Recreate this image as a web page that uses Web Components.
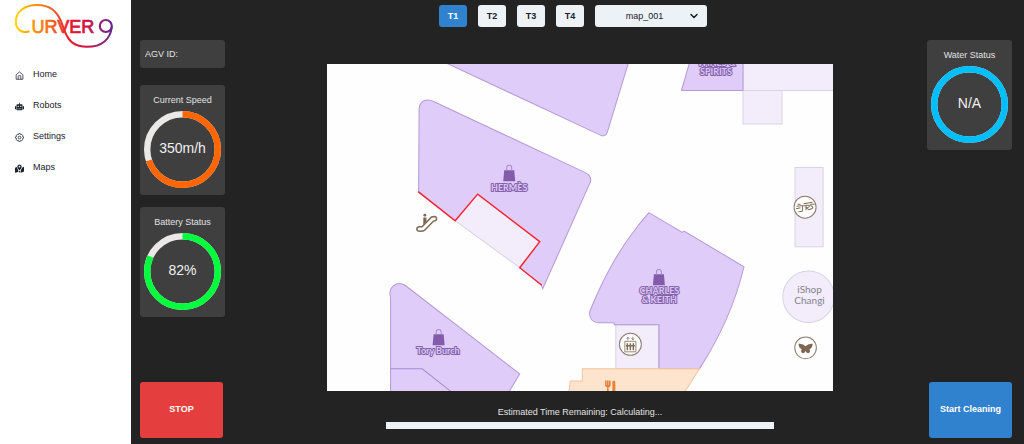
<!DOCTYPE html>
<html lang="en">
<head>
<meta charset="utf-8">
<title>Curvero</title>
<style>
  body { margin: 0; background: #232323; font: 9px/12px "Liberation Sans", Arial, sans-serif; color: #1a202c; }
</style>
</head>
<body>
<agv-dashboard></agv-dashboard>

<template id="t-dashboard">
  <style>
    :host { display: grid; grid-template-columns: 131px minmax(0, 1fr); min-height: 100vh; }
    main { display: flex; flex-direction: column; background: #232323; color: #e2e2e2; }
    .body { flex: 1; display: grid; grid-template-columns: 85px minmax(0, 1fr) 85px; padding: 13px 12px 6px 9px; }
    .side { display: flex; flex-direction: column; }
    .side gauge-card + gauge-card { margin-top: 12px; }
    .id { background: #3f3f3f; border-radius: 3px; padding: 8px 5px; margin-bottom: 17px; }
    .side action-button { margin-top: auto; }
    .right action-button { align-self: flex-end; }
    .centre { display: flex; flex-direction: column; align-items: center; padding: 24px 0 0 8px; }
    floor-map { width: 73%; }
    time-remaining { width: 56%; margin-top: 15px; }
  </style>
  <side-nav></side-nav>
  <main>
    <top-bar></top-bar>
    <div class="body">
      <div class="side">
        <div class="id">AGV ID:</div>
        <gauge-card label="Current Speed" value="350m/h" percent="70" color="#ff6600"></gauge-card>
        <gauge-card label="Battery Status" value="82%" percent="82" color="#00ff3c"></gauge-card>
        <action-button tone="#e53e3e">STOP</action-button>
      </div>
      <div class="centre">
        <floor-map></floor-map>
        <time-remaining></time-remaining>
      </div>
      <div class="side right">
        <gauge-card label="Water Status" value="N/A" percent="100" color="#00bfff"></gauge-card>
        <action-button tone="#3182ce">Start Cleaning</action-button>
      </div>
    </div>
  </main>
</template>

<template id="t-nav">
  <style>
    :host { display: block; background: #fff; }
    brand-logo { margin: 4px 0 0 14px; }
    nav { display: grid; gap: 19px; padding: 19px 15px; }
  </style>
  <brand-logo></brand-logo>
  <nav>
    <nav-item icon="home">Home</nav-item>
    <nav-item icon="robot">Robots</nav-item>
    <nav-item icon="gear">Settings</nav-item>
    <nav-item icon="map">Maps</nav-item>
  </nav>
</template>

<template id="t-logo">
  <style>
    :host { display: block; width: 101px; }
    svg { display: block; width: 100%; }
    text { font: 18px "Liberation Sans", Arial, sans-serif; stroke-width: .7; }
  </style>
  <svg viewBox="14 4 101 45" role="img" aria-label="Curvero">
    <defs>
      <linearGradient id="g" gradientUnits="userSpaceOnUse" x1="15" y1="0" x2="114" y2="0">
        <stop offset="0" stop-color="#ffd900"/><stop offset=".17" stop-color="#fb9a10"/>
        <stop offset=".36" stop-color="#f3661f"/><stop offset=".54" stop-color="#ea1c2c"/>
        <stop offset=".72" stop-color="#d2123f"/><stop offset=".88" stop-color="#8e2078"/>
        <stop offset="1" stop-color="#5d2791"/>
      </linearGradient>
    </defs>
    <path d="M29.500 31.200C22 34 15.800 29.500 15.800 21.500C15.800 11.500 25 5.100 37 5.100C51 5.100 56.500 12 60.500 20L65.500 33C69 41 74 46.800 87 46.800C102 46.800 110.500 39 111.800 27" fill="none" stroke="url(#g)" stroke-width="2"/>
    <text x="31.500" y="32.500" fill="url(#g)" stroke="url(#g)">URVER</text>
    <circle cx="105.800" cy="26" r="6" fill="none" stroke="url(#g)" stroke-width="2.200"/>
  </svg>
</template>

<template id="t-item">
  <style>
    :host { display: block; }
    a { display: flex; align-items: flex-end; gap: 9px; color: inherit; text-decoration: none; }
    svg { width: 9px; height: 9px; flex: none; }
  </style>
  <a href="#"><svg viewBox="0 0 24 24" aria-hidden="true"></svg><span><slot></slot></span></a>
</template>

<template id="t-top">
  <style>
    :host { display: flex; justify-content: center; gap: 11px; padding: 5px 9px 0 0; }
    button, select { font: inherit; height: 22px; border: 0; border-radius: 3px; background: #edf2f7; color: #1a202c; padding: 0; }
    button { width: 28px; font-weight: bold; }
    button[aria-pressed="true"] { background: #3182ce; color: #fff; }
    .pick { display: grid; width: 112px; align-items: center; }
    .pick > * { grid-area: 1 / 1; }
    select { appearance: none; width: 100%; padding-right: 13px; text-align: center; text-align-last: center; }
    svg { width: 8px; height: 8px; justify-self: end; margin-right: 9px; pointer-events: none; }
  </style>
  <button type="button" aria-pressed="true">T1</button>
  <button type="button" aria-pressed="false">T2</button>
  <button type="button" aria-pressed="false">T3</button>
  <button type="button" aria-pressed="false">T4</button>
  <div class="pick">
    <select aria-label="Map"><option>map_001</option></select>
    <svg viewBox="0 0 8 8" aria-hidden="true"><path d="M1 2.500L4 5.500L7 2.500" fill="none" stroke="#1a202c" stroke-width="1.500" stroke-linecap="round" stroke-linejoin="round"/></svg>
  </div>
</template>

<template id="t-gauge">
  <style>
    :host { display: block; background: #3f3f3f; border-radius: 3px; padding: 9px 4px 7px; text-align: center; }
    .dial { display: grid; place-items: center; margin-top: 5px; }
    .dial > * { grid-area: 1 / 1; }
    svg { display: block; width: 100%; transform: rotate(-90deg); }
    circle { fill: none; stroke-width: 6.400; }
    .value { font-size: 14px; line-height: 16px; color: #f0f0f0; margin-bottom: 3px; }
  </style>
  <div class="label"></div>
  <div class="dial">
    <svg viewBox="0 0 77 77" aria-hidden="true">
      <circle cx="38.500" cy="38.500" r="35.300" stroke="#ebe9e7"/>
      <circle class="arc" cx="38.500" cy="38.500" r="35.300" pathLength="100"/>
    </svg>
    <div class="value"></div>
  </div>
</template>

<template id="t-action">
  <style>
    :host { display: block; width: 83px; }
    button { width: 100%; height: 56px; border: 0; border-radius: 3px; padding: 0 0 2px; font: inherit; font-weight: bold; color: #fff; background: var(--tone); }
  </style>
  <button type="button"><slot></slot></button>
</template>

<template id="t-time">
  <style>
    :host { display: grid; gap: 4px; text-align: center; }
    progress { appearance: none; display: block; width: 100%; height: 7px; border: 0; background: #edf2f7; }
    progress::-webkit-progress-bar { background: #edf2f7; }
    progress::-webkit-progress-value { background: #3182ce; }
  </style>
  <label for="p">Estimated Time Remaining: Calculating...</label>
  <progress id="p" max="100" value="0"></progress>
</template>

<template id="t-map">
  <style>
    :host { display: block; }
    svg { display: block; width: 100%; background: #fefefe; }
    .shop { fill: #dfccf9; stroke: #b49ad8; stroke-width: 1; }
    .hall { fill: #f2ecfb; stroke: #d9d3e2; stroke-width: 1; }
    .food { fill: #fee3cd; stroke: #f3c49c; stroke-width: 1; }
    .name { font: 700 9px Lato, sans-serif; text-anchor: middle; fill: #d9c7f2; stroke: #8661ad; stroke-width: 2; paint-order: stroke; stroke-linejoin: round; }
    .place { font: 10px Lato, sans-serif; text-anchor: middle; fill: #85818b; }
    .badge { fill: #fff; stroke: #8a7b6b; stroke-width: 1; }
    .ink { fill: none; stroke: #7d6d57; }
    .solid { fill: #7d6650; }
  </style>
  <svg viewBox="327 64 506 327" role="img" aria-label="Floor map">
    <defs>
      <g id="bag">
        <path d="M-5 -11H5L6 0H-6Z" fill="#825bab"/>
        <path d="M-2.500 -10.500V-13C-2.500 -16.800 2.500 -16.800 2.500 -13V-10.500" fill="none" stroke="#a78bc9"/>
      </g>
    </defs>
    <path class="shop" d="M446 63L600 135Q605 137.500 607 132L628 63Z"/>
    <path class="shop" d="M418.500 191.500L419 108.500Q420 100 427.500 100Q430.500 100 433.500 101.500L585 172.500Q592 176 590 182L542.500 288.500L541 284.500L519.500 267.500L539.500 241.500L477.500 194L455 220.500Z"/>
    <path class="hall" d="M477.500 194L539.500 241.500L519.500 267.500L455 220.500Z"/>
    <path d="M418 191.500L455 220.500L477.500 194L539.500 241.500L519.500 267.500L541.500 285" fill="none" stroke="#f9222f" stroke-width="1.400"/>
    <path class="hall" d="M742.500 63H834V90.500H742.500ZM742.500 90.500H781.500V124H742.500Z"/>
    <path class="shop" d="M689 63L681 90.500H742.500V63Z"/>
    <path class="hall" d="M794.500 167.500H822.500V246.500H794.500Z"/>
    <circle class="hall" cx="808" cy="296.500" r="25.700"/>
    <path class="shop" d="M648.500 212.500L681.500 232L684 231L743.500 266.500Q731 319 699 368.500H658.500V324.500H614L613.500 322.500H598Q588 321 589.500 311Q610 260 638 225Z"/>
    <path class="hall" d="M615.500 324.500H658.500V368.500H615.500Z"/>
    <path d="M614 324.500H658.500V368.500" fill="none" stroke="#b49ad8"/>
    <path class="food" d="M568.500 392L570 380.500H582V368.500H699L684 392Z"/>
    <path d="M605.500 380V384.500Q605.500 386 607.500 386Q609.500 386 609.500 384.500V380M607.500 380V392" fill="none" stroke="#e27d37" stroke-width="1.500"/>
    <path d="M612 392V382Q612 380 613.500 380Q615 380 615 382V392Z" fill="#e8833c"/>
    <path class="shop" d="M390.500 392V297C387.500 287 397 280 405 285L519.500 373.500L508.500 392Z"/>
    <path d="M390.500 368.500H422L452 392" fill="none" stroke="#a98bd1"/>

    <use href="#bag" x="509" y="181"/>
    <use href="#bag" x="438.500" y="345"/>
    <use href="#bag" x="658.500" y="285"/>
    <text class="name" x="509" y="190.500">HERMÈS</text>
    <text class="name" x="438" y="354">Tory Burch</text>
    <text class="name" x="659" y="294">CHARLES</text>
    <text class="name" x="659" y="303">&amp; KEITH</text>
    <text class="name" x="716" y="66">WINES &amp;</text>
    <text class="name" x="715.500" y="75">SPIRITS</text>
    <text class="place" x="809" y="293">iShop</text>
    <text class="place" x="809" y="304">Changi</text>

    <!-- escalator -->
    <path class="ink" stroke-width="1.500" stroke-linejoin="round" d="M419.500 226.500H422L431 217.200Q432 216.200 434 216.200Q436.600 216.500 436.500 218.700Q436 221 433.500 220.800L424.500 230Q423.500 231 420 231Q416.700 231 416.700 228.700Q417 226.500 419.500 226.500Z"/>
    <circle class="solid" cx="424.700" cy="215" r="1.400"/>
    <path class="solid" d="M423.200 217.200H426.300V221.500L423.200 224.500Z"/>
    <!-- rail transit -->
    <circle class="badge" cx="804.500" cy="207" r="11"/>
    <path class="ink" stroke-width="1" d="M796 206L800 205.500M795.500 208.500L800 207.500M799.500 205.500H805M802 205.500V210.500M805.500 210V205H808.500Q810 207 805.500 207.500L809 210M814 204H810.500Q809 205.500 812 206.700Q813 208.500 808.500 209.300M798 211.500L802 211M803 203.500L812 202M797 204H800"/>
    <!-- lift -->
    <circle class="badge" cx="630" cy="344" r="11"/>
    <path class="ink" stroke-width=".8" d="M624.500 341H635.500V351.500H624.500ZM627.500 340V337M626.300 338.300L627.500 337L628.700 338.300M632.500 336.500V339.500M631.300 338.200L632.500 339.500L633.700 338.200"/>
    <path class="ink" stroke-width="1.500" d="M627 343V350M630 343V350M633 343V350M625.500 345.500H634.500"/>
    <!-- butterfly garden -->
    <circle class="badge" cx="805" cy="347.500" r="10.800"/>
    <path class="solid" d="M805 346Q802.500 343 798 343.500Q798 347.500 801 349Q799.500 352 802.500 353Q804.500 352.500 805 350.500Q805.500 352.500 807.500 353Q810.500 352 809 349Q812 347.500 812 343.500Q807.500 343 805 346Z"/>
  </svg>
</template>

<script>
  const stamp = (host, id) => {
    const root = host.attachShadow({ mode: 'open' });
    root.append(document.getElementById(id).content.cloneNode(true));
    return root;
  };
  const plain = (tag, id) => customElements.define(tag, class extends HTMLElement {
    constructor() { super(); stamp(this, id); }
  });

  const ICONS = {
    home: '<g fill="none" stroke="currentColor" stroke-width="2" stroke-linejoin="round"><path d="M3 10L12 2.500L21 10V22H3Z"/><path d="M8.500 22V14Q8.500 12.500 10 12.500H14Q15.500 12.500 15.500 14V22"/></g>',
    robot: '<path fill="currentColor" fill-rule="evenodd" d="M11 2H13V6H18Q20 6 20 8V20Q20 22 18 22H6Q4 22 4 20V8Q4 6 6 6H11ZM0 11H3V19H0ZM21 11H24V19H21ZM7 10V13.500H10V10ZM14 10V13.500H17V10ZM7 17V19H9.500V17ZM11 17V19H13V17ZM14.500 17V19H17V17Z"/>',
    gear: '<g fill="none" stroke="currentColor" stroke-width="2" stroke-linejoin="round"><path d="M10 1.500H14L15 4.500L18 3.500L20.500 6L19.500 9L22.500 10V14L19.500 15L20.500 18L18 20.500L15 19.500L14 22.500H10L9 19.500L6 20.500L3.500 18L4.500 15L1.500 14V10L4.500 9L3.500 6L6 3.500L9 4.500Z"/><circle cx="12" cy="12" r="3.500"/></g>',
    map: '<path fill="currentColor" fill-rule="evenodd" d="M12 1Q18 1.500 18 7Q17.500 11 12 17Q6.500 11 6 7Q6 1.500 12 1ZM12 4.500A2.200 2.200 0 1 0 12 9A2.200 2.200 0 1 0 12 4.500ZM0 10L5 8Q6 12 8 15V21L0 23.500ZM9.500 17L12 19.500L14.500 17V23L9.500 21ZM16 15Q18 13 19.500 9L24 7V20L16 23Z"/>'
  };

  plain('top-bar', 't-top');
  plain('time-remaining', 't-time');
  plain('floor-map', 't-map');
  plain('brand-logo', 't-logo');

  customElements.define('nav-item', class extends HTMLElement {
    connectedCallback() {
      if (this.shadowRoot) return;
      stamp(this, 't-item').querySelector('svg').innerHTML = ICONS[this.getAttribute('icon')];
    }
  });

  customElements.define('gauge-card', class extends HTMLElement {
    connectedCallback() {
      if (this.shadowRoot) return;
      const root = stamp(this, 't-gauge');
      root.querySelector('.label').textContent = this.getAttribute('label');
      root.querySelector('.value').textContent = this.getAttribute('value');
      const arc = root.querySelector('.arc');
      arc.setAttribute('stroke', this.getAttribute('color'));
      arc.setAttribute('stroke-dasharray', this.getAttribute('percent') + ' 100');
    }
  });

  customElements.define('action-button', class extends HTMLElement {
    connectedCallback() {
      if (this.shadowRoot) return;
      stamp(this, 't-action');
      this.style.setProperty('--tone', this.getAttribute('tone'));
    }
  });

  plain('side-nav', 't-nav');
  plain('agv-dashboard', 't-dashboard');
</script>
</body>
</html>
